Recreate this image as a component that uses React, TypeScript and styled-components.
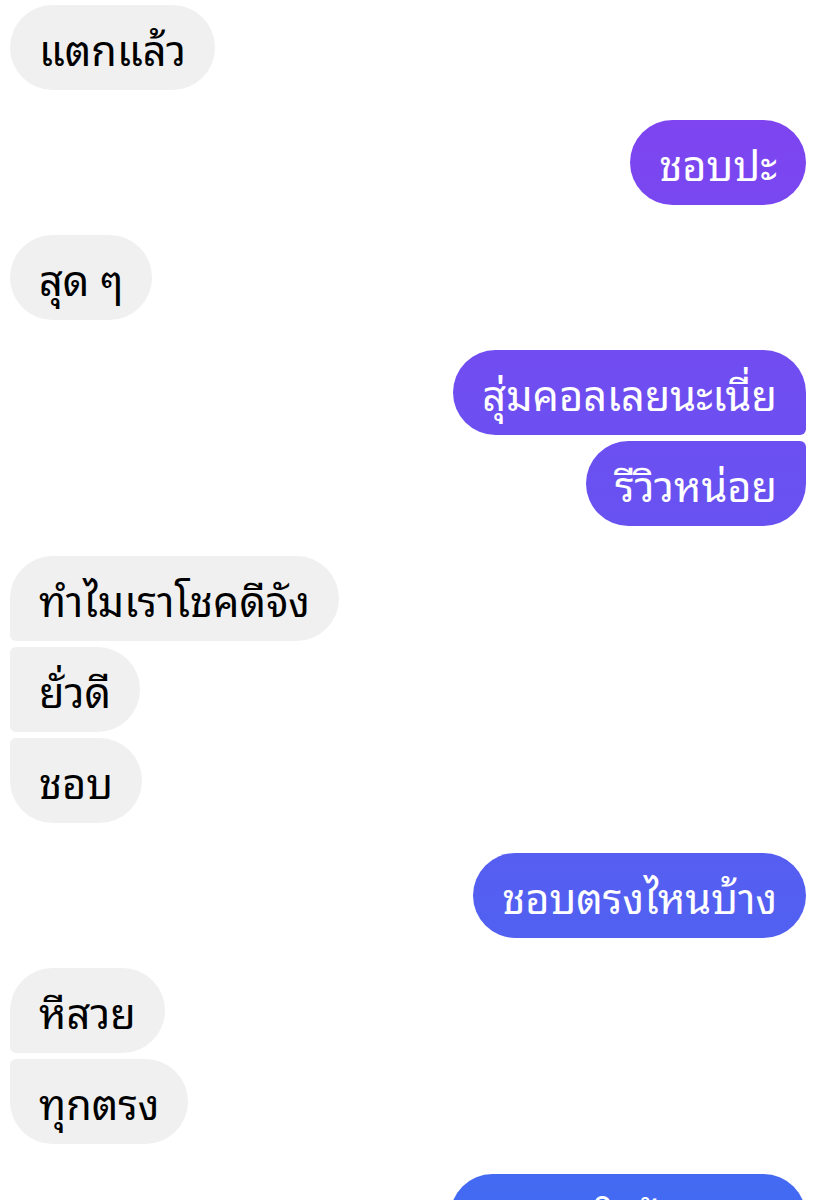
import React from "react";
import styled, { createGlobalStyle, css } from "styled-components";

const Global = createGlobalStyle`
  html, body { margin: 0; padding: 0; background: #ffffff; }
  body { font-family: "Noto Sans Thai Looped", "Noto Sans", "Liberation Sans", sans-serif; overflow: hidden; }
`;

type Side = "in" | "out";
type Pos = "single" | "first" | "middle" | "last";

const Thread = styled.div`
  display: flex;
  flex-direction: column;
  gap: 30px;
  padding: 5px 19px 0 10px;
  height: 1200px;
  box-sizing: border-box;
  overflow: hidden;
`;

const Group = styled.div<{ $side: Side }>`
  display: flex;
  flex-direction: column;
  gap: 6px;
  align-items: ${(p) => (p.$side === "out" ? "flex-end" : "flex-start")};
`;

const BIG = 43;
const SMALL = 6;

const radius = (side: Side, pos: Pos) => {
  const top = pos === "middle" || pos === "last" ? SMALL : BIG;
  const bottom = pos === "middle" || pos === "first" ? SMALL : BIG;
  if (side === "in") return `${top}px ${BIG}px ${BIG}px ${bottom}px`;
  return `${BIG}px ${top}px ${bottom}px ${BIG}px`;
};

const Bubble = styled.div<{ $side: Side; $pos: Pos }>`
  display: inline-flex;
  align-items: center;
  height: 85px;
  padding: 0 29px;
  box-sizing: border-box;
  font-size: 41.5px;
  font-weight: 400;
  line-height: 1;
  white-space: nowrap;
  border-radius: ${(p) => radius(p.$side, p.$pos)};
  ${(p) =>
    p.$side === "in"
      ? css`
          background: #f0f0f0;
          color: #000000;
        `
      : css`
          color: #ffffff;
          background: linear-gradient(to bottom, #8440f0 0px, #436af2 1200px) fixed;
        `}
`;

const messages: { side: Side; texts: string[] }[] = [
  { side: "in", texts: ["แตกแล้ว"] },
  { side: "out", texts: ["ชอบปะ"] },
  { side: "in", texts: ["สุด ๆ"] },
  { side: "out", texts: ["สุ่มคอลเลยนะเนี่ย", "รีวิวหน่อย"] },
  { side: "in", texts: ["ทำไมเราโชคดีจัง", "ยั่วดี", "ชอบ"] },
  { side: "out", texts: ["ชอบตรงไหนบ้าง"] },
  { side: "in", texts: ["หีสวย", "ทุกตรง"] },
  { side: "out", texts: ["ชอบนะใจน้อยมาก"] },
];

const posOf = (i: number, n: number): Pos =>
  n === 1 ? "single" : i === 0 ? "first" : i === n - 1 ? "last" : "middle";

export default function App() {
  return (
    <>
      <Global />
      <Thread>
        {messages.map((g, gi) => (
          <Group key={gi} $side={g.side}>
            {g.texts.map((t, i) => (
              <Bubble key={i} $side={g.side} $pos={posOf(i, g.texts.length)}>
                {t}
              </Bubble>
            ))}
          </Group>
        ))}
      </Thread>
    </>
  );
}
